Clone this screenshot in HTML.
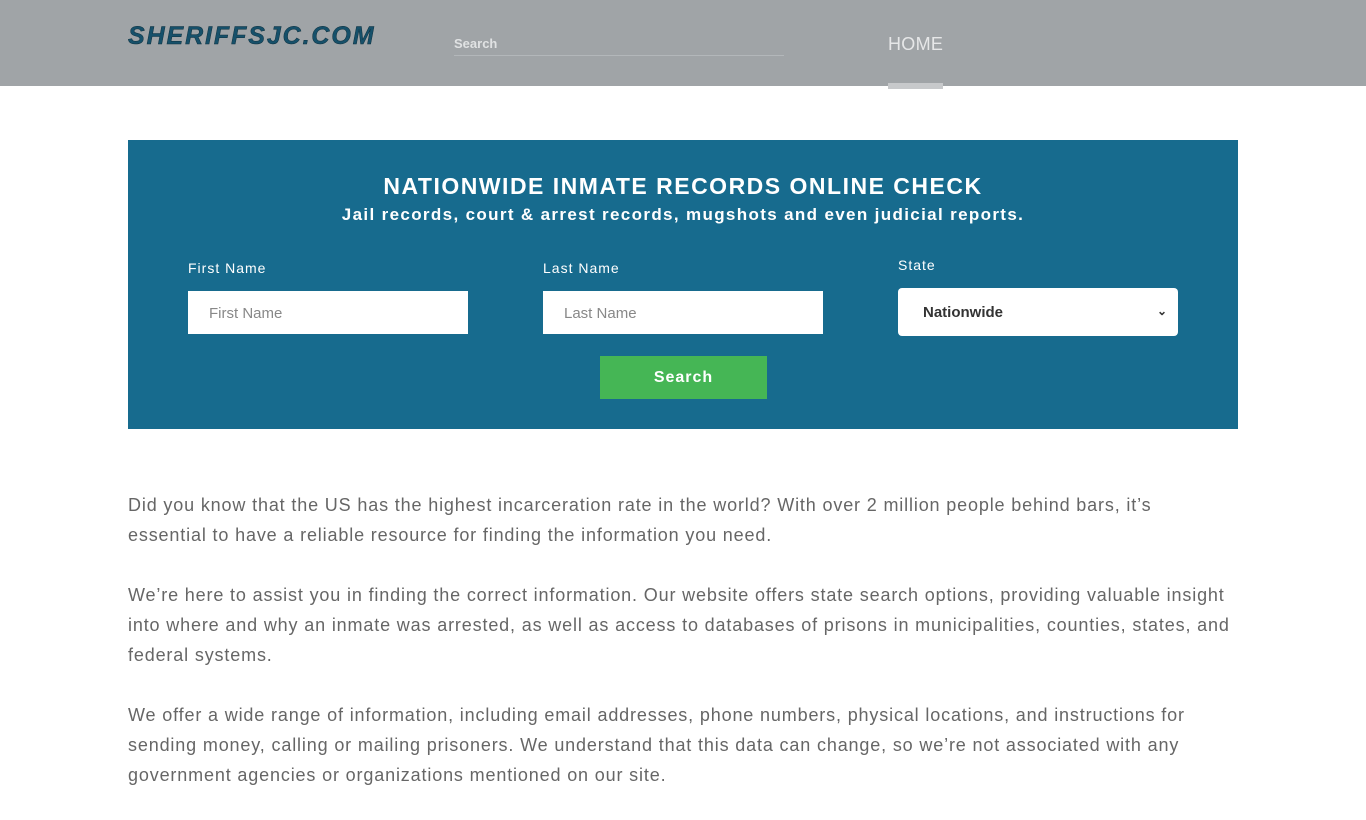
<!DOCTYPE html>
<html><head><style>
html,body{margin:0;height:768px;overflow:hidden;}
body{font-family:"Liberation Sans",sans-serif;background:#fff;}
.hdr{height:86px;background:#a0a4a7;position:relative;}
.logo{position:absolute;left:128px;top:22px;font-size:25px;font-weight:bold;font-style:italic;color:#16506a;letter-spacing:1.9px;-webkit-text-stroke:0.5px #0d2f3d;}
.srch{position:absolute;left:454px;top:36px;width:330px;height:19px;border-bottom:1px solid #b3b7ba;color:#e0e2e3;font-size:13px;font-weight:bold;}
.home{position:absolute;left:888px;top:34px;color:#e6e7e8;font-size:18px;letter-spacing:0.3px;}
.bar{position:absolute;left:888px;top:83px;width:55px;height:6px;background:#c7c9cb;}
.box{position:absolute;left:128px;top:140px;width:1110px;height:289px;background:#176b8e;color:#fff;}
h1{margin:0;position:absolute;top:33px;width:100%;text-align:center;font-size:23px;letter-spacing:1.5px;font-weight:bold;}
.sub{position:absolute;top:65px;width:100%;text-align:center;font-size:17px;font-weight:bold;letter-spacing:1.35px;}
.lbl{position:absolute;font-size:14px;letter-spacing:1px;}
.inp{position:absolute;width:280px;height:43px;background:#fff;color:#888;font-size:15px;box-sizing:border-box;padding:14px 21px;}
.sel{border-radius:4px;color:#333;font-weight:bold;height:48px;padding:16px 25px;}
.btn{position:absolute;left:472px;top:216px;width:167px;height:43px;background:#45b655;text-align:center;line-height:43px;font-size:16px;font-weight:bold;letter-spacing:1px;}
.txt{position:absolute;left:128px;top:490px;width:1200px;color:#666;font-size:18px;line-height:30px;letter-spacing:0.85px;white-space:nowrap;}
.txt p{margin:0 0 30px;}
</style></head><body>
<div class="hdr"><div class="logo">SHERIFFSJC.COM</div><div class="srch">Search</div><div class="home">HOME</div><div class="bar"></div></div>
<div class="box">
<h1>NATIONWIDE INMATE RECORDS ONLINE CHECK</h1>
<div class="sub">Jail records, court &amp; arrest records, mugshots and even judicial reports.</div>
<div class="lbl" style="left:60px;top:120px">First Name</div>
<div class="lbl" style="left:415px;top:120px">Last Name</div>
<div class="lbl" style="left:770px;top:117px">State</div>
<div class="inp" style="left:60px;top:151px">First Name</div>
<div class="inp" style="left:415px;top:151px">Last Name</div>
<div class="inp sel" style="left:770px;top:148px">Nationwide<span style="float:right;margin-right:-14px;font-size:12px">&#8964;</span></div>
<div class="btn">Search</div>
</div>
<div class="txt">
<p>Did you know that the US has the highest incarceration rate in the world? With over 2 million people behind bars, it’s<br>essential to have a reliable resource for finding the information you need.</p>
<p>We’re here to assist you in finding the correct information. Our website offers state search options, providing valuable insight<br>into where and why an inmate was arrested, as well as access to databases of prisons in municipalities, counties, states, and<br>federal systems.</p>
<p>We offer a wide range of information, including email addresses, phone numbers, physical locations, and instructions for<br>sending money, calling or mailing prisoners. We understand that this data can change, so we’re not associated with any<br>government agencies or organizations mentioned on our site.</p>
</div>
</body></html>
